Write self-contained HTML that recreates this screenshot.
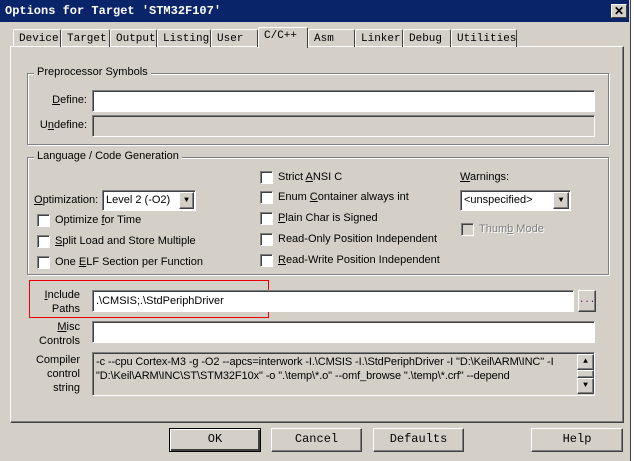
<!DOCTYPE html>
<html><head><meta charset="utf-8"><style>
*{box-sizing:border-box;margin:0;padding:0}
body{width:634px;height:461px;background:#fff;position:relative;overflow:hidden;font-family:"Liberation Sans",sans-serif;font-size:11px;color:#000}
.a{position:absolute}
#win{left:0;top:0;width:631px;height:461px;background:#d4d0c8;border-right:1px solid #404040}
#tb{left:0;top:0;width:629px;height:22px;background:#0a246a;color:#fff;font:bold 12px "Liberation Mono",monospace;padding:4px 5px}
#x{left:611px;top:4px;width:16px;height:14px;background:#d4d0c8;border:1px solid;border-color:#fff #404040 #404040 #fff;font:bold 12px "Liberation Sans";text-align:center;line-height:12px;color:#000}
.tab{top:29px;height:18px;border:1px solid;border-color:#fff #404040 transparent #fff;border-bottom:none;font:11px "Liberation Mono",monospace;padding:3px 0 0 5px;border-radius:2px 2px 0 0}
#panel{left:10px;top:46px;width:614px;height:377px;border:1px solid;border-color:#fff #404040 #404040 #fff;box-shadow:inset -1px -1px #808080}
.grp{border:1px solid #808080;box-shadow:1px 1px #fff, inset 1px 1px #fff}
.gl{background:#d4d0c8;padding:0 3px}
.in{background:#fff;border:1px solid;border-color:#808080 #fff #fff #808080;box-shadow:inset 1px 1px #404040}
.dis{background:#d4d0c8}
.cb{width:13px;height:13px;background:#fff;border:1px solid;border-color:#808080 #fff #fff #808080;box-shadow:inset 1px 1px #404040}
.btn{background:#d4d0c8;border:1px solid;border-color:#fff #404040 #404040 #fff;box-shadow:inset -1px -1px #808080;font:12px "Liberation Mono",monospace;text-align:center;line-height:21px}
.r{text-align:right}
u{text-decoration:underline}
</style></head><body>
<div id="win" class="a"></div>
<div id="tb" class="a">Options for Target 'STM32F107'</div>
<div id="x" class="a">✕</div>
<div id="panel" class="a"></div>
<div class="a tab" style="left:13px;width:48px">Device</div>
<div class="a tab" style="left:61px;width:49px">Target</div>
<div class="a tab" style="left:110px;width:47px">Output</div>
<div class="a tab" style="left:157px;width:54px">Listing</div>
<div class="a tab" style="left:211px;width:47px">User</div>
<div class="a tab" style="left:258px;top:27px;height:21px;width:50px;background:#d4d0c8;padding-top:2px">C/C++</div>
<div class="a tab" style="left:308px;width:47px">Asm</div>
<div class="a tab" style="left:355px;width:48px">Linker</div>
<div class="a tab" style="left:403px;width:48px">Debug</div>
<div class="a tab" style="left:451px;width:66px">Utilities</div>

<div class="a grp" style="left:27px;top:73px;width:582px;height:72px"></div>
<div class="a gl" style="left:34px;top:66px">Preprocessor Symbols</div>
<div class="a r" style="left:30px;top:94px;width:57px"><u>D</u>efine:</div>
<div class="a in" style="left:92px;top:90px;width:503px;height:22px"></div>
<div class="a r" style="left:30px;top:119px;width:57px">U<u>n</u>define:</div>
<div class="a in dis" style="left:92px;top:115px;width:503px;height:22px"></div>

<div class="a grp" style="left:27px;top:157px;width:582px;height:118px"></div>
<div class="a gl" style="left:34px;top:150px">Language / Code Generation</div>
<div class="a" style="left:34px;top:194px"><u>O</u>ptimization:</div>
<div class="a in" style="left:102px;top:190px;width:94px;height:21px;padding:3px 3px">Level 2 (-O2)</div>
<div class="a btn" style="left:179px;top:192px;width:15px;height:17px;font-size:8px;line-height:15px">▼</div>
<div class="a cb" style="left:37px;top:214px"></div><div class="a" style="left:55px;top:214px">Optimize <u>f</u>or Time</div>
<div class="a cb" style="left:37px;top:235px"></div><div class="a" style="left:55px;top:235px"><u>S</u>plit Load and Store Multiple</div>
<div class="a cb" style="left:37px;top:256px"></div><div class="a" style="left:55px;top:256px">One <u>E</u>LF Section per Function</div>

<div class="a cb" style="left:260px;top:171px"></div><div class="a" style="left:278px;top:171px">Strict <u>A</u>NSI C</div>
<div class="a cb" style="left:260px;top:191px"></div><div class="a" style="left:278px;top:191px">Enum <u>C</u>ontainer always int</div>
<div class="a cb" style="left:260px;top:212px"></div><div class="a" style="left:278px;top:212px"><u>P</u>lain Char is Signed</div>
<div class="a cb" style="left:260px;top:233px"></div><div class="a" style="left:278px;top:233px">Read-Only Position Independent</div>
<div class="a cb" style="left:260px;top:254px"></div><div class="a" style="left:278px;top:254px"><u>R</u>ead-Write Position Independent</div>

<div class="a" style="left:460px;top:171px"><u>W</u>arnings:</div>
<div class="a in" style="left:460px;top:190px;width:111px;height:21px;padding:3px 3px">&lt;unspecified&gt;</div>
<div class="a btn" style="left:553px;top:192px;width:16px;height:17px;font-size:8px;line-height:15px">▼</div>
<div class="a cb" style="left:461px;top:223px;background:#d4d0c8"></div><div class="a" style="left:479px;top:223px;color:#808080;text-shadow:1px 1px #fff">Thum<u>b</u> Mode</div>

<div class="a" style="left:29px;top:280px;width:240px;height:38px;border:1px solid #e00"></div>
<div class="a r" style="left:30px;top:288px;width:50px;line-height:14px"><u>I</u>nclude<br>Paths</div>
<div class="a in" style="left:92px;top:290px;width:482px;height:22px;padding:4px 3px">.\CMSIS;.\StdPeriphDriver</div>
<div class="a btn" style="left:578px;top:290px;width:18px;height:22px;line-height:18px;font-size:9px;color:#606">...</div>
<div class="a r" style="left:30px;top:320px;width:50px;line-height:14px"><u>M</u>isc<br>Controls</div>
<div class="a in" style="left:92px;top:321px;width:503px;height:22px"></div>
<div class="a r" style="left:30px;top:353px;width:50px;line-height:14px">Compiler<br>control<br>string</div>
<div class="a in dis" style="left:92px;top:352px;width:503px;height:44px;padding:2px 3px;line-height:14px;font-size:11px;letter-spacing:-0.1px;white-space:nowrap;overflow:hidden">-c --cpu Cortex-M3 -g -O2 --apcs=interwork -I.\CMSIS -I.\StdPeriphDriver -I "D:\Keil\ARM\INC" -I<br>"D:\Keil\ARM\INC\ST\STM32F10x" -o ".\temp\*.o" --omf_browse ".\temp\*.crf" --depend</div>
<div class="a btn" style="left:577px;top:354px;width:17px;height:16px;font-size:8px;line-height:14px">▲</div>
<div class="a btn" style="left:577px;top:370px;width:17px;height:8px"></div>
<div class="a btn" style="left:577px;top:378px;width:17px;height:16px;font-size:8px;line-height:14px">▼</div>

<div class="a btn" style="left:169px;top:428px;width:92px;height:24px;border:1px solid #000;box-shadow:inset 1px 1px #fff,inset -2px -2px #404040">OK</div>
<div class="a btn" style="left:271px;top:428px;width:91px;height:24px">Cancel</div>
<div class="a btn" style="left:373px;top:428px;width:91px;height:24px">Defaults</div>
<div class="a btn" style="left:531px;top:428px;width:92px;height:24px">Help</div>
</body></html>
